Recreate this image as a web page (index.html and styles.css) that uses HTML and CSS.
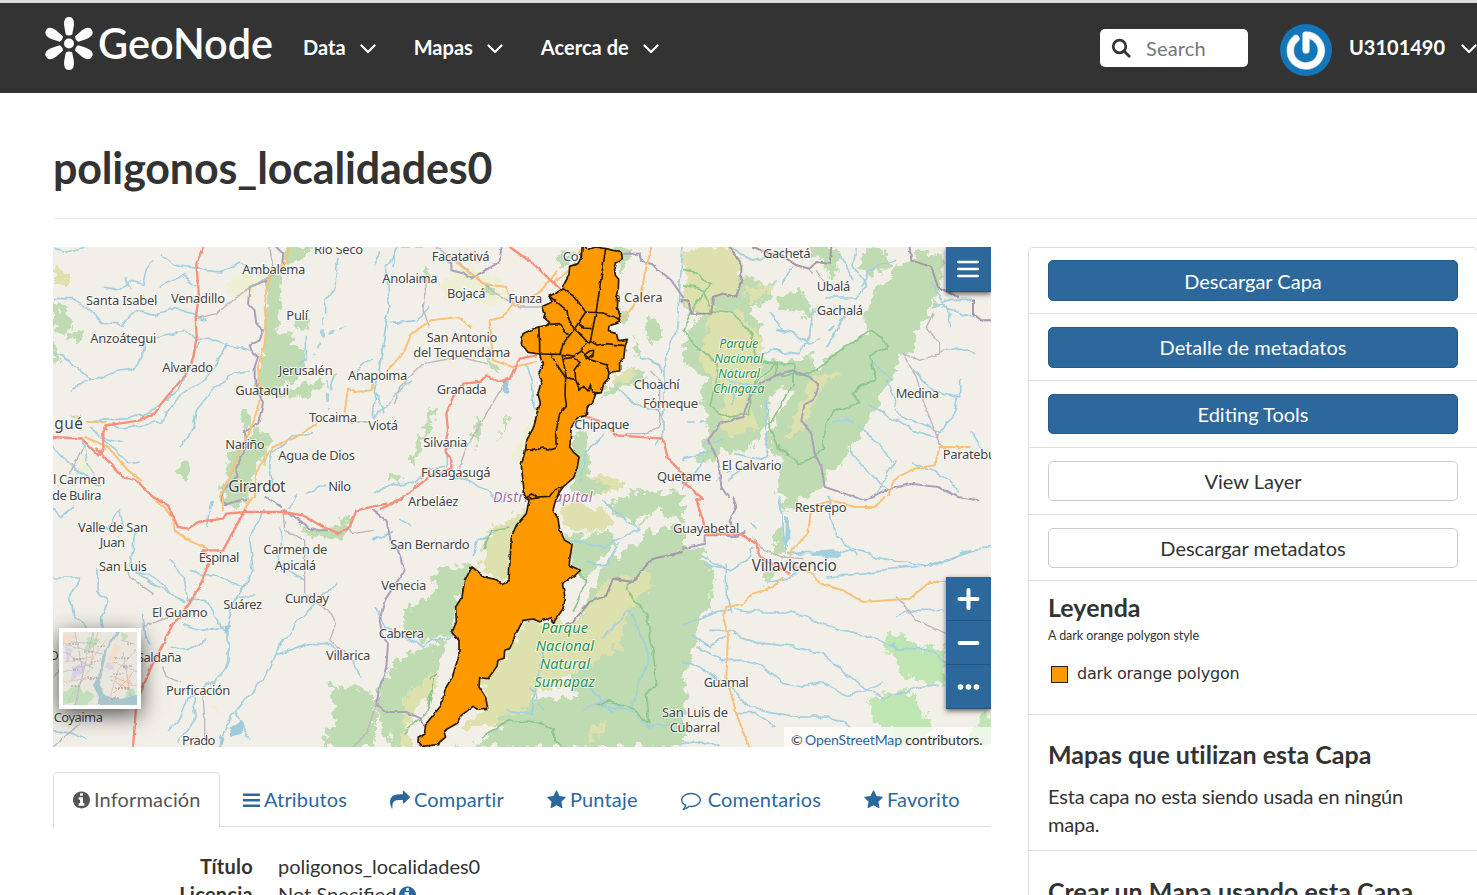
FILE: index.html
```html
<!DOCTYPE html>
<html lang="es">
<head>
<meta charset="utf-8">
<title>poligonos_localidades0</title>
<link rel="stylesheet" href="styles.css">
</head>
<body>
<header class="navbar">
  <a class="brand"><svg width="230" height="56" viewBox="44 15 230 56">
    <g fill="#fff">
      <g id="petals"><path id="petal" d="M69 17c4.800 0 5.300 5 4.800 9l-1.600 8.500q-3.200 2.200-6.400 0L64.200 26c-.5-4 0-9 4.800-9z"/>
      <use href="#petal" transform="rotate(60 69 43.500)"/><use href="#petal" transform="rotate(120 69 43.500)"/><use href="#petal" transform="rotate(180 69 43.500)"/><use href="#petal" transform="rotate(240 69 43.500)"/><use href="#petal" transform="rotate(300 69 43.500)"/></g>
      <circle cx="69" cy="43.500" r="5"/>
      <text class="brand-text" x="98" y="59" textLength="175" lengthAdjust="spacingAndGlyphs">GeoNode</text>
    </g></svg></a>
  <nav class="menu">
    <a class="menu-item">Data <svg class="chev" viewBox="0 0 16 10"><path d="M1.500 1.500 8 8l6.500-6.500"/></svg></a>
    <a class="menu-item">Mapas <svg class="chev" viewBox="0 0 16 10"><path d="M1.500 1.500 8 8l6.500-6.500"/></svg></a>
    <a class="menu-item">Acerca de <svg class="chev" viewBox="0 0 16 10"><path d="M1.500 1.500 8 8l6.500-6.500"/></svg></a>
  </nav>
  <div class="search"><svg width="20" height="20" viewBox="0 0 20 20" fill="none" stroke="#333" stroke-width="2.700"><circle cx="8.500" cy="8.500" r="6.300"/><path d="m13 13 5.200 5.200" stroke-linecap="round"/></svg><span>Search</span></div>
  <div class="user">
    <svg width="52" height="52" viewBox="0 0 52 52"><circle cx="26" cy="26" r="26" fill="#1276b8"/><g fill="none" stroke-linecap="round" stroke-linejoin="round"><path d="M26 11v15M26 11A15.500 15.500 0 1 1 16 14.500" stroke="#bcd7ea" stroke-width="7.500"/><path d="M26 11v15M26 11A15.500 15.500 0 1 1 16 14.500" stroke="#fff" stroke-width="6"/></g></svg>
    <span>U3101490</span>
    <svg class="chev" viewBox="0 0 16 10"><path d="M1.500 1.500 8 8l6.500-6.500"/></svg>
  </div>
</header>
<main class="page">
  <h1 class="title">poligonos_localidades0</h1>
  <div class="columns">
    <section class="content">
      <div class="map">
        <svg class="map-canvas" width="938" height="500" viewBox="0 0 938 500">
          <defs>
            <filter id="rough" x="-5%" y="-5%" width="110%" height="110%"><feTurbulence type="fractalNoise" baseFrequency=".11" numOctaves="4" seed="4"/><feDisplacementMap in="SourceGraphic" scale="17" xChannelSelector="R" yChannelSelector="G"/></filter>
            <filter id="wiggle" x="-5%" y="-5%" width="110%" height="110%"><feTurbulence type="fractalNoise" baseFrequency=".07" numOctaves="2" seed="9"/><feDisplacementMap in="SourceGraphic" scale="8" xChannelSelector="R" yChannelSelector="G"/></filter>
            <filter id="jag" x="-5%" y="-5%" width="110%" height="110%"><feTurbulence type="fractalNoise" baseFrequency=".15" numOctaves="2" seed="2"/><feDisplacementMap in="SourceGraphic" scale="3" xChannelSelector="R" yChannelSelector="G"/></filter>
          </defs>
          <rect width="938" height="500" fill="#f2efe9"/>
          <g filter="url(#rough)">
            <g transform="scale(.33333)">
              <path class="wood" d="M690 0h85l-25 25-45 30-10-20zM645 80l45 5-5 60-15 110 55 5-5 30 30 15 5 35-20 55-80 35 40 0 110-35 0 15-60 50-50-25-60 15-30-10 30-160 5-150zM720 210l55 0 0 35-40 0zM60 245l30 10-5 30-35-10zM0 165l30 20 35 40-25 30-40-10zM0 260l15 60 0 30-15-5zM565 485l25 5 0 60-25-10zM600 550l25 0 30 10-10 50-35 60-25 70-15 10-60 0 20-130 45-20zM390 635l25 20-10 30-20 20-10-15zM65 500l25 0 0 30-25 0z"/>
              <path class="heath" d="M0 65l50 10-10 35-40 20z"/>
              <path class="field" d="M520 100l60-15 45 5 5 25-60 35-50-10zM590 120l25 10-20 55zM95 620l20 50-50 10z"/>
              <path class="wood" d="M505 750l75 0-35 35-30-10zM865 800l25 10 0 40-30 30-100-15-25-25 60 5 70-10zM830 1315l60 10 70 10v165H810l10-60 30-5-10-40z"/>
              <path class="field" d="M480 1370l20 0-5 25-15-5z"/>
            </g>
            <g transform="translate(320) scale(.33333)">
              <path class="field" d="M215 80l70-25 90 40 40 60-70 20-80-25-60 10zM455 540l30-30 0 60-40 80-25-30z"/>
              <path class="wood" d="M560 20l40 0-20 40-30-10zM340 110l30 10-10 35-20-10zM165 60l15 20-10 30-20-20zM720 0l55 10-30 70 -10-20zM710 420l60-50 60 10-60 40-80 30zM180 485l15 5-75 170-10-25zM310 510l20 20-20 70-15-40zM50 680l40 15-5 15-30-10zM740 180l30 20-10 40-20-10zM830 210l30 15 10 50-30 20-25-40zM340 300l25 40 15 40-25-10zM780 260l25 50-20 30zM400 500l5 20-30 60zM600 555l40 15-10 60-25-10z"/>
              <path class="heath" d="M715 390l50-25 25 20-50 35zM640 700l60-20 60 30-50 30-60-10zM350 850l110-60 0 60-60 160-80-50z"/>
              <path class="wood" d="M190 970l110-20-40 100-20 110-80 20-80-30 20-70 80-30zM70 1240l100-40 60-30-50 120-60 110-40 100-20 0-65-130zM690 960l50-35 120-90 70 15v650H240l100-50 90-90 190-10-60-150 70-120zM570 860l70 10 60-20 30 50-50 40-40 60-40-40zM700 780l90-50 140 10v90l-70-40-80 40zM590 600l60 20 0 80 60 20-50 30-70-20 20-50z"/>
              <path class="heath" d="M455 1125l85-5 60 10 100-130 100-20 30-20 0 60-50 60-20 20-20 100-100 60-160 90-20 40-160 50-40 0 80-50-20-100 70-50zM550 770l80 0 70 20 20 40-70 30-60-10zM80 1500l20-160 80-60 20-10-30 120-60 110zM650 1450l50-30-20 50-40 10z"/>
              <path class="bare" d="M100 1450l30-80 60-20-70 140zM260 1470l70-40 60 0-80 70-60 0z"/>
            </g>
            <g transform="translate(630) scale(.33333)">
              <path class="wood" d="M0 60L100 40L160 90L270 110L265 150L200 180L240 260L230 320L290 345L380 320L400 360L470 310L550 250L540 220L580 130L640 60L720 10L790 40L755 170L700 270L690 320L650 310L640 370L600 440L570 500L540 560L500 600L490 640L430 680L420 720L350 750L280 750L300 640L250 590L280 520L330 430L290 420L240 480L260 520L200 610L130 610L100 640L40 640L80 560L50 440L70 400L0 340L0 300L50 210L0 180ZM370 0l90 0 10 60-30 40-20-50zM280 150l70-20 50 60-20 30-40-30-60 0zM540 20l40-20 50 50-60 40-40-30z"/>
              <path class="heath" d="M0 20L60 0L150 0L175 60L160 150L90 150L80 200L20 190L0 150ZM80 190L160 190L240 280L230 330L240 400L190 430L220 540L140 570L100 530L130 440L50 350ZM180 130l80-20 10 20-70 40zM390 390L470 375L420 420L380 500L330 570L310 580L350 470Z"/>
              <path class="wood" d="M0 900l60 10 30 70-10 100-40 50-10 120-30 20zM290 750l60 0-20 40-30-10zM280 850l20-20 10 50-10 40-30-5zM240 980l40-20-20 50-20-10zM0 1250l15 100-15 20z"/>
              <path class="field2" d="M615 1150l60 25 50 25 60 0v120l-110-30-60-70-10-40zM560 1350l90-20 40 10 50 100-60 60h-50l-20-60-40-10zM860 1460l40-60 40 20v70h-60z"/>
            </g>
          </g>
          <g filter="url(#wiggle)">
            <g transform="scale(.33333)">
              <path class="river" d="M320 20l60 40 70 10 60 5 50-30 60 20M155 120l40 10 40-25 40 10 10-50 15-25M220 90l20 40M320 115l70-30 40 30M0 155l60 0 40 30 60 45 50 5 30-45 70 15 60-20 90 30M310 270l80-20 40 30 60 0 60 20 40 10M270 290l0 40-40 40-60 10-50 20-70 30M120 400l-50-45-70-40M440 285l-25 60-40 80-70 60-70 30-110 5M525 285l-60 100-80 60-60 80-110 20-60-10M590 370l-50 10-70 60-40 50-10 50-40 60M90 570l10 80 30 50M110 540l70 60 50 50 30-5M150 570l60 15M0 600l70 70 80 50M855 30l-10 90-30 40 0 40M850 380l-20 50M660 620l-10 40 10 60M660 620l60-50 60-10M960 330l-50 40M0 5l40 10 60-15M820 710l-60 30M0 780l20 30 40-30M760 270l0 70-20 10"/>
              <path class="dash" d="M810 210l0 60-30 60M880 240l-60 20M825 400l0 90M350 440l-10 35"/>
              <path class="river" d="M140 830l20 20 40-60 15 60M245 850l-5 60-10 50 70 30 60 50 30 25M350 940l40 50 10 70 60 0 40 70 25 30 0 80-10 30-60 60-50 20-20 60-40 40M245 970l60 50 60 20M410 970l80 20 80 30M630 790l-40 80 10 100-50 80-30 90M685 840l0 60-10 50 80 50M0 990l80 0-30 60 10 60 60 40 30 10-5-50 20-50-30-30 0-60M265 1100l10 60 20 30M390 1130l60 20 80-20M450 1180l-40 30-60-10M850 1010l-60 50-60 70-60 80-40 90-60 70-50 60-20 70M670 1220l100-30 50 0 80 50 20 50M550 1050l60 0M420 1350l10 60-30 40-25 40M550 1400l40 80M0 1450l60 10 40 20M460 840l15-80M730 740l-20 40"/>
              <path class="lake" d="M530 1440l35-20 0 40-30 10zM500 1460l15 20-10 20zM515 1130l15 0 0 40-15-10z"/>
            </g>
            <g transform="translate(320) scale(.33333)">
              <path class="river" d="M150 0l-70 0-40 60 10 120-10 50-20 130-20 150M50 230l80-10 40-40M70 0l-10 60M0 60l20-50M120 400l-60 50-60 60M455 350l20 60 5 70 15 10M730 420l50 50 80 20M930 0l-10 120-10 140-40 100 0 200-20 40M690 560l-50 60-20 80M0 740l60-30 60 0 40-40 60-10 0-50 30-20M220 690l60 10 60 30 50 40M0 880l60-30M85 810l25 30M300 930l20-50 50-30M0 1080l40 60 110 60 60-30 30-5M590 880l100 20 110-50M640 950l60 0 40-60M800 850l-50-40-60-50M480 1400l-80-10M470 1400l40-180M720 1400l-70-80M690 1170l80-80 60 130-40 110-10 60M510 1390l-40-70M620 1390l80-30 60 30M660 1370l110 20 60 50 100-10M0 400l30 100M800 330l60 20 0 30"/>
              <path class="lake" d="M390 400l20 5-5 40-20-5z"/>
            </g>
            <g transform="translate(630) scale(.33333)">
              <path class="river" d="M520 0l-10 60 40 60-30 30-90 0M470 20l40 80M640 40l-80 30-30 50M140 0l60 40 60-10M330 60l-30 50M390 190l-10 70-30 60-90-10M280 250l60 10 40 30 30-20M500 190l-70 110M260 190l40 60M0 640l100-30M60 590l60-10M250 460l0 150-10 30-90-20M130 700l50-40M610 400l20 50 20 60 60 20 70 30M690 370l60 60 80 20 0-60M770 320l60-20 50 20M740 100l60 100 0 40M780 180l60 20 40 10M750 180l60-20 60 0M560 470l60 40 70 40 70 20M500 610l60 70 60 50M520 530l70 60 40 60M640 640l-60 100M690 650l60 20 80 60M820 450l-10 60-50 60M860 550l40 70M570 350l60 50M140 400l100 20M150 430l0 50M450 520l60 5M0 730l60-90M285 750l15 50 0 50 10 60M440 750l0 60 20 60 50 40 110 30 120 20 60-20 50-30 90-10M310 920l190-10M500 910l20 20M430 990l120-10 60-10 120-10 80-30 60-20M60 930l70 40 0 80 10 50M60 950l80 20 60-40 10-30M150 1085l60 10 100 0 80 20 70 30 90 20 100 40 80 0 60 40M150 1160l100 30 80 10 90 20 60 50 70 60 60 20 100-30 60 0M40 1200l80 40 60 0 60 20 60 50 60 10 60-15 60 40 60-10 60-30M0 1240l80 40 60 40 60 60 90 20 60 10 90 0 60 30M160 1400l60 0 60 40M0 1135l80-30 60-20M80 1150l60 0 20 10M30 1170l50 30 50-30M640 1110l60-20 80 0M200 830l20 20M130 970l0-20M0 1490l60-10 50 20M260 1010l80-30"/>
              <path class="dash" d="M240 320l60-10M440 250l60-50M10 525l60 0M100 700l60-50"/>
              <path class="river thick" d="M315 810l-3 90M380 920l90 0"/>
            </g>
            <g class="parkline">
              <path transform="translate(630) scale(.33333)" d="M560 250l40 20 10 30-50 30 20 70-50 10-20 30 20 30-80 20-20 40-10 80-70 40-60-50-30-70 70-120 0-60-50 0-60 50-20 40 0 60-60 10-60-30 20-80 0-50-70-60-30-40 30-70 50-70-30-30-50-10M80 190l70 10 60 60 10 80 60 10 0 40 120-20 70-60 90-60M0 110l60 20 20 50"/>
              <path transform="translate(320) scale(.33333)" d="M780 1000l-20 30 60 70 20 110 10 100-30 30 10 90-60-50-60-15-40 10M590 950l50 50-40 100M330 900l20-50 60-10M170 1290l20-10-30 120-70 60M330 1470l80-50 100 10 30 20 0 30 30 20"/>
            </g>
          </g>
          <g class="roads" filter="url(#jag)">
            <g transform="scale(.33333)">
              <path class="border" d="M670 0l20 20-3 50M640 100l-50 20-5 50 20 20 5 40 20 20-10 30-30 15 10 25 15 10-10 30 0 30 10 40 15 40-15 60-40 20 5 50-30 60 0 30-40 40-5 30 15 15M505 755l5 20 50-15 20 0M640 750l45 30M690 790l50 30 40 30 40 0"/>
              <path class="rail" d="M690 70l-100 50-100 80-60 15M50 680l40-80M690 790l5 60 60 30 0 100 0 60 80 60 15 30-20 50 60 50M220 960l10 30 70 50M270 1140l80-30M330 1260l10 30 40 15M450 1350l5 60 0 70M0 1290l60-60M0 1500l80-70M890 850l10 10 60-10M880 525l70 0M650 0l10 60M960 1400l-20 60-40 40"/>
              <path class="orange" d="M705 0l-5 50-45 20-15 60-5 50 5 50-5 60-20 70 5 60M620 460l-20 70-40 80-30 80-30 60M960 410l-5 20-50 5-20-10-10 70M790 530l-60 40-70 30-50 70-5 80M600 750l-25 35M510 790l0-40M300 750l60 60 5 40 40 30 60 25M100 525l60 0M95 570l70 30 60 70 40 30"/>
              <path class="red" d="M450 0l-20 50 8 100-10 60 3 60-10 60-20 50-60 70-40 50-40 20-100 15-10 20 0 55-15 15-50-50-85-5M130 605l80 85 40 10 50 50 45 25 30 65 30 5 30-20 75-10 10-15 60-5h110l60 10 60 35 50 20 30-20 20-50 90-20M575 790l-65 120-60 0 20 30-30 80-60 90-20 20-70 140-40 100-10 130"/>
            </g>
            <g transform="translate(320) scale(.33333)">
              <path class="border" d="M205 30l30 20 0 20 40 10 20 15 50-30 35-20 5-45M740 20l60 0 5 25 30 5 60 50 35 50M0 790l40 30 15 70 20 20 20 60-60 90-15 60 10 50 15 20-5 70-20 60-10 50 30 25 60 0 45 20 15 30-20 50"/>
              <path class="rail" d="M190 0l70 50 110 90 70 40 65 0M0 1400l20-50M160 100l-10 90 20 50M340 350l-80-20-110 20-70 70-15 50M400 400l-60 100-60 100-20 60M830 370l30 30 0 140-40 20-60 0"/>
              <path class="orange" d="M230 30l100 80 70 10 20 50-30 40-40 10 10 120 60 20 70-15M45 370l50-60 20-50 60-40 80-10 40 30M540 110l60-50 20-50M430 175l70-40 50-60M835 0l-20 80-10 70-60 70"/>
              <path class="red" d="M410 0l70 50 80 75M490 325l-50 10-30 60-35 10-35-20-20 20-50 5-30 40-20 50 5 50-10 60 20 30 0 25-60 20-90 70-60 30M640 510l50 15 40 40 140 10 15 60 60 60"/>
              <path class="border dark" d="M580 1130l20-5 50-60 50-20 20-50 60 10 40-50 20-20 90-20"/>
            </g>
            <g transform="translate(630) scale(.33333)">
              <path class="border dark" d="M140 0l35 50 0 50-15 50-40-10-30 10-5 50-60 0-10-40-20 0M210 0l50 20 30 0 50 35 40 10 20-20 40 5 5-50M680 0l5 40 60 20 20 60 60 30M870 160l0 40 25 20 35 0"/>
              <path class="border" d="M200 450l30-40 60-30 40-10 50 20 25 25-15 45-25 10-10 50 30 40 10 60 20 40 10 60 60 20 60 20 60-30 80-20 80 10 60 30 60 10M200 450l-20 60-70 20-35 50 30 60 10 80 20 30M150 750l10 30-20 40 15 50M0 905l65-15 0-25 60 0 30 5 30-15"/>
              <path class="rail" d="M750 200l-20 40 40 50 0 30-60 20-50-20 40 70 20 70 50 130 30 30M380 70l10 10M210 870l30 40 60 20 60 5M640 1050l20 20 40 50 90 40M400 70l20 30"/>
              <path class="red" d="M0 705l60 50-20 5 20 60 10 40 50 0 50 0 50 30 10 40 90 50"/>
              <path class="orange" d="M860 600l-90 0-15 55-60 10-60 30-20 50M605 750l-30 30-60 0-70-20-60 20-10 80-50 50-5 30 20 20 50 20 20 30 70 20 60 35 140-10 60-50h90M300 990l-30 30-60 20-30 30-50 10-10 30 15 50-5 130 30 110 30 80 15 30"/>
            </g>
          </g>
          <g transform="translate(320) scale(.33333)"><g class="places"><text class="district" x="360" y="765" textLength="298">Distrito Capital</text><text x="569" y="42">Cota</text><text x="701" y="166" textLength="168">La Calera</text></g></g>
          <g class="layer-wrap" filter="url(#jag)"><g class="layer" transform="translate(320) scale(.33333)">
            <path fill="#f90" d="M628-9L645 8L668 0L700 5L720 10L745 14L748 38L730 48L725 68L727 85L737 97L736 125L730 145L734 165L733 185L742 208L738 225L722 232L708 236L706 253L730 260L736 281L763 277L756 300L752 335L740 345L740 372L708 376L705 395L692 410L685 437L668 440L660 465L643 478L640 505L612 514L595 540L590 600L602 616L618 630L612 665L602 692L570 720L550 750L540 790L555 815L560 848L575 880L597 892L588 955L622 970L603 988L568 1010L577 1055L570 1085L542 1126L530 1113L500 1124L480 1116L450 1120L432 1155L410 1205L395 1210L393 1234L375 1240L372 1258L345 1295L320 1292L318 1320L338 1352L344 1384L312 1386L300 1378L265 1405L250 1430L212 1452L218 1470L200 1485L197 1493L145 1498L135 1485L136 1470L155 1460L158 1432L205 1375L217 1325L238 1290L258 1225L258 1180L237 1157L250 1125L248 1080L267 1050L275 1000L297 960L335 990L370 998L388 1013L408 1000L415 870L430 835L460 800L468 760L455 750L445 655L458 605L462 578L480 545L492 500L502 468L495 440L506 400L498 380L508 350L500 321L465 316L445 290L450 260L475 248L495 240L520 236L530 226L512 212L516 200L509 178L538 165L528 148L570 127L575 108L588 85L590 58L615 50L625 30Z"/>
            <path fill="none" d="M698 5L670 190L652 283M570 125L605 150L638 195L605 245L570 290L560 323M638 195L690 198L730 212L740 220M530 148L582 190L585 212L603 245L628 265M530 232L560 230L583 263M618 232L632 243L656 245M605 245L648 290L652 283L672 294L700 290L755 296M497 240L500 290L500 318M500 321L565 322L604 327L625 312L638 285M625 312L650 338L702 354L707 376M650 312L662 310L660 325L640 335L632 325ZM535 325L558 362L578 392M568 326L580 392L608 398L620 430L632 418L645 432L652 415L656 435L680 438M572 335L600 332L622 347L606 370L608 398M578 392L576 440L580 478L560 500L548 560L550 604M458 608L480 610L510 603L535 608L550 603M455 750L475 740L490 750L530 748L545 728L570 720M465 750L475 756L500 752"/>
          </g></g>
          <g class="places">
            <g transform="scale(.33333)">
              <text x="783" y="20" textLength="147">Río Seco</text><text x="568" y="80" textLength="189">Ambalema</text><text x="99" y="174" textLength="214">Santa Isabel</text><text x="354" y="168" textLength="162">Venadillo</text><text x="700" y="218" textLength="65">Pulí</text><text x="112" y="288" textLength="198">Anzoátegui</text><text x="328" y="375" textLength="152">Alvarado</text><text x="677" y="385" textLength="162">Jerusalén</text><text x="547" y="443" textLength="161">Guataqui</text><text class="city" x="4" y="545" textLength="86">gué</text><text x="768" y="525" textLength="144">Tocaima</text><text x="517" y="606" textLength="118">Nariño</text><text x="676" y="640" textLength="230">Agua de Dios</text><text x="0" y="711" textLength="157">l Carmen</text><text x="-3" y="758" textLength="149">de Bulira</text><text class="city" x="526" y="735" textLength="172">Girardot</text><text x="826" y="731" textLength="68">Nilo</text><text x="885" y="400" textLength="178">Anapoima</text><text x="946" y="550" textLength="89">Viotá</text>
            </g>
            <g transform="translate(0 250) scale(.33333)">
              <text x="75" y="104" textLength="210">Valle de San</text><text x="140" y="151" textLength="76">Juan</text><text x="138" y="221" textLength="144">San Luis</text><text x="437" y="196" textLength="122">Espinal</text><text x="631" y="172" textLength="192">Carmen de</text><text x="665" y="218" textLength="124">Apicalá</text><text x="511" y="336" textLength="116">Suárez</text><text x="696" y="319" textLength="132">Cunday</text><text x="297" y="359" textLength="167">El Guamo</text><text x="252" y="495" textLength="134">Saldaña</text><text x="-13" y="489">Or</text><text x="819" y="489" textLength="133">Villarica</text><text x="339" y="595" textLength="193">Purficación</text><text x="2" y="676" textLength="148">Coyaima</text><text x="387" y="743" textLength="100">Prado</text>
            </g>
            <g transform="translate(320) scale(.33333)">
              <text x="176" y="42" textLength="174">Facatativá</text><text x="28" y="107" textLength="166">Anolaima</text><text x="222" y="152" textLength="116">Bojacá</text><text x="406" y="169" textLength="102">Funza</text><text x="161" y="284" textLength="212">San Antonio</text><text x="121" y="331" textLength="291">del Tequendama</text><text x="191" y="440" textLength="150">Granada</text><text x="782" y="427" textLength="138">Choachí</text><text x="810" y="483" textLength="165">Fómeque</text><text x="604" y="546" textLength="165">Chipaque</text><text x="151" y="599" textLength="132">Silvania</text><text x="144" y="691" textLength="209">Fusagasugá</text><text x="852" y="702" textLength="163">Quetame</text>
            </g>
            <g transform="translate(320 250) scale(.33333)">
              <text x="105" y="28" textLength="151">Arbeláez</text><text x="52" y="157" textLength="238">San Bernardo</text><text x="25" y="278" textLength="135">Venecia</text><text x="17" y="422" textLength="136">Cabrera</text><text x="867" y="659" textLength="198">San Luis de</text><text x="890" y="706" textLength="151">Cubarral</text><text x="900" y="107" textLength="199">Guayabetal</text>
              <g class="park"><text x="505" y="409" textLength="140">Parque</text><text x="488" y="463" textLength="175">Nacional</text><text x="500" y="515" textLength="151">Natural</text><text x="484" y="569" textLength="182">Sumapaz</text></g>
            </g>
            <g transform="translate(630) scale(.33333)">
              <text x="240" y="32" textLength="143">Gachetá</text><text x="401" y="132" textLength="101">Ubalá</text><text x="401" y="203" textLength="139">Gachalá</text><text x="116" y="669" textLength="180">El Calvario</text><text x="638" y="454" textLength="130">Medina</text><text x="779" y="637" textLength="160">Paratebu</text>
              <g class="park small"><text x="109" y="304" textLength="117">Parque</text><text x="94" y="349" textLength="147">Nacional</text><text x="105" y="394" textLength="126">Natural</text><text x="90" y="439" textLength="154">Chingaza</text></g>
            </g>
            <g transform="translate(630 250) scale(.33333)">
              <text x="335" y="44" textLength="156">Restrepo</text><text class="city" x="206" y="223" textLength="255">Villavicencio</text><text x="62" y="570" textLength="135">Guamal</text>
            </g>
          </g>
        </svg>
        <a class="map-btn map-menu"><svg width="24" height="20" viewBox="0 0 24 20" stroke="#fff" stroke-width="2.300" stroke-linecap="round"><path d="M1 3h20M1 10h20M1 17h20"/></svg></a>
        <div class="map-tools">
          <a class="map-btn"><svg width="24" height="24" viewBox="0 0 24 24" stroke="#fff" stroke-width="4" stroke-linecap="round"><path d="M2.500 12h18M11.500 3v18"/></svg></a>
          <a class="map-btn"><svg width="24" height="24" viewBox="0 0 24 24" stroke="#fff" stroke-width="4" stroke-linecap="round"><path d="M2.500 12h18"/></svg></a>
          <a class="map-btn"><svg width="24" height="24" viewBox="0 0 24 24" fill="#fff"><circle cx="3.500" cy="12" r="2.800"/><circle cx="11.500" cy="12" r="2.800"/><circle cx="19.500" cy="12" r="2.800"/></svg></a>
        </div>
        <div class="thumb"><svg width="74" height="73" viewBox="0 0 74 73">
          <rect width="74" height="73" fill="#e9e6dd"/>
          <g filter="url(#jag)"><path fill="#bfe0b8" d="M25 5l12 2-6 8-10 5zM0 60l16-8 6 15-22 6zM24 58l8 6-8 9H10zM58 0l8 4-6 6zM62 60l8-4 4 10-8 4z"/><path fill="#d9d2e6" d="M10 35l14-6-4 12-12 8zM2 14l8 4-6 14zM44 30l8 0-2 8-8-2z"/><path fill="#f3dcc8" d="M52 12l6 2-8 20-5-4zM55 48l12-5 2 12-12 4zM0 2l14 2-8 8-6 2z"/><path fill="#a9c6cd" d="M53 0h4l-13 17-4 20-3 16 4 10 16 4 17-4v10H34l2-8-6-12 6-10 3-18 8-16z"/><path class="thumb-road" stroke="#e5b7a8" d="M0 30l30-5 14-18M5 70l20-30 10-40M45 73l10-35 18-20M0 50l35-5M48 44l26 10M50 62l22-22"/><path class="thumb-road" stroke="#c0b8c6" d="M0 12l40 10M12 0l8 40-8 33M30 0L18 50M50 30l24 10M48 48l20 10M60 20l8 45M0 40l30-8M0 20l30 16M8 10l26 2M58 8l14 4"/><path class="thumb-road specks" stroke="#8d8a98" d="M6 12h10M34 14h9M10 27h12M28 30h9M8 38h7M52 26h14M24 46h10M50 42h12M8 54h9M52 56h14M48 66h9M60 34h8M22 20h8M64 12h6"/></g>
        </svg></div>
        <div class="attribution">© <a>OpenStreetMap</a> contributors.</div>
      </div>
      <ul class="tabs">
        <li class="tab active"><svg width="17" height="20" viewBox="128 0 1536 1792"><path d="M1152 1376v-160q0-14-9-23t-23-9h-96v-512q0-14-9-23t-23-9h-320q-14 0-23 9t-9 23v160q0 14 9 23t23 9h96v320h-96q-14 0-23 9t-9 23v160q0 14 9 23t23 9h448q14 0 23-9t9-23zm-128-896v-160q0-14-9-23t-23-9h-192q-14 0-23 9t-9 23v160q0 14 9 23t23 9h192q14 0 23-9t9-23zm640 416q0 209-103 385.500t-279.500 279.500-385.500 103-385.500-103-279.500-279.500-103-385.500 103-385.500 279.500-279.500 385.500-103 385.500 103 279.500 279.500 103 385.500z"/></svg>Información</li>
        <li class="tab"><svg width="17" height="20" viewBox="0 0 17 20"><path d="M0 3.500h17v2.500H0zM0 9h17v2.500H0zM0 14.500h17V17H0z"/></svg>Atributos</li>
        <li class="tab"><svg width="20" height="20" viewBox="0 0 1792 1792"><path d="M1792 640q0 26-19 45l-512 512q-19 19-45 19t-45-19-19-45v-256h-224q-98 0-175.500 6t-154 21.500-133 42.500-105.500 69.500-80 101-48.500 138.500-17.500 181q0 55 5 123 0 6 2.500 23.500t2.500 26.500q0 15-8.500 25t-23.500 10q-16 0-28-17-7-9-13-22t-13.500-30-10.500-24q-127-285-127-451 0-199 53-333 162-403 875-403h224v-256q0-26 19-45t45-19 45 19l512 512q19 19 19 45z"/></svg>Compartir</li>
        <li class="tab"><svg width="19" height="20" viewBox="64 0 1664 1792"><path d="M1728 647q0 22-26 48l-363 354 86 500q1 7 1 20 0 21-10.500 35.500t-30.500 14.500q-19 0-40-12l-449-236-449 236q-22 12-40 12-21 0-31.500-14.500t-10.500-35.500q0-6 2-20l86-500-364-354q-25-27-25-48 0-37 56-46l502-73 225-455q19-41 49-41t49 41l225 455 502 73q56 9 56 46z"/></svg>Puntaje</li>
        <li class="tab wide"><svg width="20" height="20" viewBox="0 0 1792 1792"><path d="M896 384q-204 0-381.500 69.500t-282 187.500-104.500 255q0 112 71.500 213.500t201.500 175.500l87 50-27 96q-24 91-70 172 152-63 275-171l43-38 57 6q69 8 130 8 204 0 381.500-69.500t282-187.500 104.500-255-104.500-255-282-187.500-381.500-69.500zm896 512q0 174-120 321.500t-326 233-450 85.500q-70 0-145-8-198 175-460 242-49 14-114 22h-5q-15 0-27-10.500t-16-27.500v-1q-3-4-.5-12t2-10 4.500-9.500l6-9 7-8.500 8-9q7-8 31-34.500t34.500-38 31-39.500 32.500-51 27-59 26-76q-157-89-247.500-220t-90.500-281q0-174 120-321.500t326-233 450-85.500 450 85.500 326 233 120 321.500z"/></svg>Comentarios</li>
        <li class="tab"><svg width="19" height="20" viewBox="64 0 1664 1792"><path d="M1728 647q0 22-26 48l-363 354 86 500q1 7 1 20 0 21-10.500 35.500t-30.500 14.500q-19 0-40-12l-449-236-449 236q-22 12-40 12-21 0-31.500-14.500t-10.500-35.500q0-6 2-20l86-500-364-354q-25-27-25-48 0-37 56-46l502-73 225-455q19-41 49-41t49 41l225 455 502 73q56 9 56 46z"/></svg>Favorito</li>
      </ul>
      <dl class="details">
        <dt>Título</dt><dd>poligonos_localidades0</dd>
        <dt>Licencia</dt><dd>Not Specified <svg class="info" width="17" height="20" viewBox="128 0 1536 1792"><path d="M1152 1376v-160q0-14-9-23t-23-9h-96v-512q0-14-9-23t-23-9h-320q-14 0-23 9t-9 23v160q0 14 9 23t23 9h96v320h-96q-14 0-23 9t-9 23v160q0 14 9 23t23 9h448q14 0 23-9t9-23zm-128-896v-160q0-14-9-23t-23-9h-192q-14 0-23 9t-9 23v160q0 14 9 23t23 9h192q14 0 23-9t9-23zm640 416q0 209-103 385.500t-279.500 279.500-385.500 103-385.500-103-279.500-279.500-103-385.500 103-385.500 279.500-279.500 385.500-103 385.500 103 279.500 279.500 103 385.500z"/></svg></dd>
      </dl>
    </section>
    <aside class="sidebar">
      <div class="action"><a class="btn primary">Descargar Capa</a></div>
      <div class="action"><a class="btn primary">Detalle de metadatos</a></div>
      <div class="action"><a class="btn primary">Editing Tools</a></div>
      <div class="action"><a class="btn">View Layer</a></div>
      <div class="action"><a class="btn">Descargar metadatos</a></div>
      <div class="block legend"><h4>Leyenda</h4><p class="note">A dark orange polygon style</p><div class="legend-row"><i class="swatch"></i><span>dark orange polygon</span></div></div>
      <div class="block maps"><h4>Mapas que utilizan esta Capa</h4><p>Esta capa no esta siendo usada en ningún mapa.</p></div>
      <div class="block maps last"><h4>Crear un Mapa usando esta Capa</h4></div>
    </aside>
  </div>
</main>
</body>
</html>
```
FILE: styles.css
```css
* { box-sizing: border-box; }
html, body { height: 895px; overflow: hidden; }
body { margin: 0; background: #fff; color: #333; font: 20px/28px Lato, "Liberation Sans", sans-serif; }
h1, h4, p, ul, dl, dd { margin: 0; padding: 0; }
.navbar { height: 93px; border-top: 3px solid #dcdcdc; background: #333; color: #fff; display: flex; padding-left: 44px; font-weight: 700; width: 1500px; }
.brand { width: 230px; padding-top: 12px; }
.brand svg { display: block; }
.brand-text { font: 600 42px Lato, sans-serif; }
.menu { display: flex; padding: 30px 0 0 29px; width: 826px; }
.menu-item { margin-right: 38px; white-space: nowrap; letter-spacing: .04px; }
.menu .chev { vertical-align: 1px; margin-left: 9px; }
.chev { width: 16px; height: 10px; margin-left: 8px; fill: none; stroke: #fff; stroke-width: 2.2; stroke-linecap: round; stroke-linejoin: round; }
.search { width: 148px; height: 38px; margin: 26px 32px 0 0; background: #fff; border-radius: 5px; display: flex; align-items: center; gap: 15px; padding-left: 11px; color: #777; font-weight: 400; letter-spacing: .15px; }
.user { display: flex; height: 52px; margin-top: 21px; white-space: nowrap; }
.user span { margin: 9px 0 0 17px; }
.user .chev { margin: 20px 0 0 16px; flex: none; }
.page { padding-left: 53px; width: 1506px; }
.title { height: 126px; padding-top: 51px; font-size: 43px; line-height: 48px; font-weight: 700; letter-spacing: -.15px; border-bottom: 1px solid #eee; }
.columns { display: flex; gap: 37px; padding-top: 28px; }
.content { width: 938px; }
.map { position: relative; height: 500px; overflow: hidden; }
.map-canvas { display: block; }
.wood { fill: #bedbb1; }
.heath { fill: #dde1ae; }
.field { fill: #edf0d2; }
.field2 { fill: #bee5b2; }
.bare { fill: #f2efe9; }
.river, .dash { fill: none; stroke: #a3d0df; stroke-width: 5; stroke-linejoin: round; }
.dash { stroke-dasharray: 22 18; }
.thick { stroke-width: 12; }
.lake { fill: #9fcbdc; }
.parkline { fill: none; stroke: #8dc68c; stroke-width: 5; stroke-linejoin: round; }
.roads { fill: none; stroke-linejoin: round; stroke-linecap: round; }
.red { stroke: #f78f7c; stroke-width: 7; }
.orange { stroke: #fac178; stroke-width: 6; }
.border { stroke: #aaa0b9; stroke-width: 6; }
.dark { stroke: #a597a7; }
.rail { stroke: #bdb6ba; stroke-width: 4; }
.layer path { stroke: #2b1b05; stroke-width: 5; stroke-linejoin: round; }
.places { font: 39px "Noto Sans", sans-serif; fill: #444; stroke: rgba(255,255,255,.75); stroke-width: 6; stroke-linejoin: round; paint-order: stroke; }
.places .city { font-size: 46px; }
.places .district { font-style: italic; font-size: 42px; fill: #a06da0; }
.park { font-style: italic; font-size: 44px; fill: #2b9450; }
.park.small { font-size: 38px; }
.map-btn { display: flex; align-items: center; justify-content: center; width: 45px; height: 44px; background: #2c689c; border-bottom: 1px solid #235581; }
.map-menu { position: absolute; right: 0; top: 0; height: 45px; box-shadow: 0 2px 5px rgba(0,0,0,.6); }
.map-tools { position: absolute; right: 0; bottom: 38px; box-shadow: 0 2px 5px rgba(0,0,0,.6); }
.thumb { position: absolute; left: 6px; top: 381px; border: 4px solid #fff; width: 82px; height: 81px; box-shadow: 0 6px 20px rgba(0,0,0,.65); }
.thumb svg { display: block; }
.thumb-road { fill: none; stroke-width: .8; }
.specks { stroke-dasharray: 2 1; }
.attribution { position: absolute; right: 0; bottom: 0; background: rgba(255,255,255,.7); height: 20px; width: 207px; padding-left: 7px; font-size: 14px; line-height: 25px; letter-spacing: -.12px; white-space: nowrap; }
.attribution a { color: #2c689c; margin-left: -1px; }
.tabs { display: flex; list-style: none; margin-top: 25px; height: 55px; border-bottom: 1px solid #ddd; color: #2c689c; }
.tab { display: flex; gap: 4px; height: 55px; padding: 12px 19px 0 20px; margin-right: 2px; border: 1px solid transparent; white-space: nowrap; letter-spacing: .15px; }
.tab svg { fill: currentColor; margin-top: 5px; flex: none; }
.tab.wide { gap: 7px; }
.tab.active { color: #555; background: #fff; border: 1px solid #ddd; border-bottom: 0; border-radius: 5px 5px 0 0; padding-left: 19px; width: 167px; }
.details { display: grid; grid-template-columns: 200px 1fr; column-gap: 25px; margin-top: 25px; }
.details dt { font-weight: 700; text-align: right; letter-spacing: .25px; }
.info { fill: #2c689c; vertical-align: -3px; margin-left: -3px; }
.sidebar { width: 450px; border: 1px solid #ddd; border-radius: 5px; }
.action { height: 67px; border-bottom: 1px solid #ddd; padding: 13px 19px 0; }
.action:first-child { height: 66px; padding-top: 12px; }
.action:nth-child(5) { height: 66px; }
.btn { display: block; height: 40px; border: 1px solid #ccc; border-radius: 5px; text-align: center; line-height: 39px; }
.btn.primary { height: 41px; background: #2c689c; border-color: #265a87; color: #fff; }
.action:first-child .btn { line-height: 41px; }
.action:nth-child(3) .btn { height: 40px; }
.block { border-bottom: 1px solid #ddd; padding: 0 19px; }
h4 { font-size: 25px; line-height: 28px; font-weight: 700; letter-spacing: .02px; }
.legend { height: 134px; padding-top: 12px; }
.note { font-size: 12.500px; line-height: 18px; padding-top: 6px; letter-spacing: -.05px; }
.legend-row { display: flex; align-items: center; gap: 9px; padding: 15px 0 0 3px; font: 16px/28px "DejaVu Sans", sans-serif; letter-spacing: -.2px; white-space: nowrap; }
.swatch { width: 17px; height: 17px; background: #f90; border: 1px solid #222; }
.maps { height: 136px; padding-top: 25px; }
.maps.last { padding-top: 26px; }
.maps p { padding-top: 14px; letter-spacing: -.19px; }
```
